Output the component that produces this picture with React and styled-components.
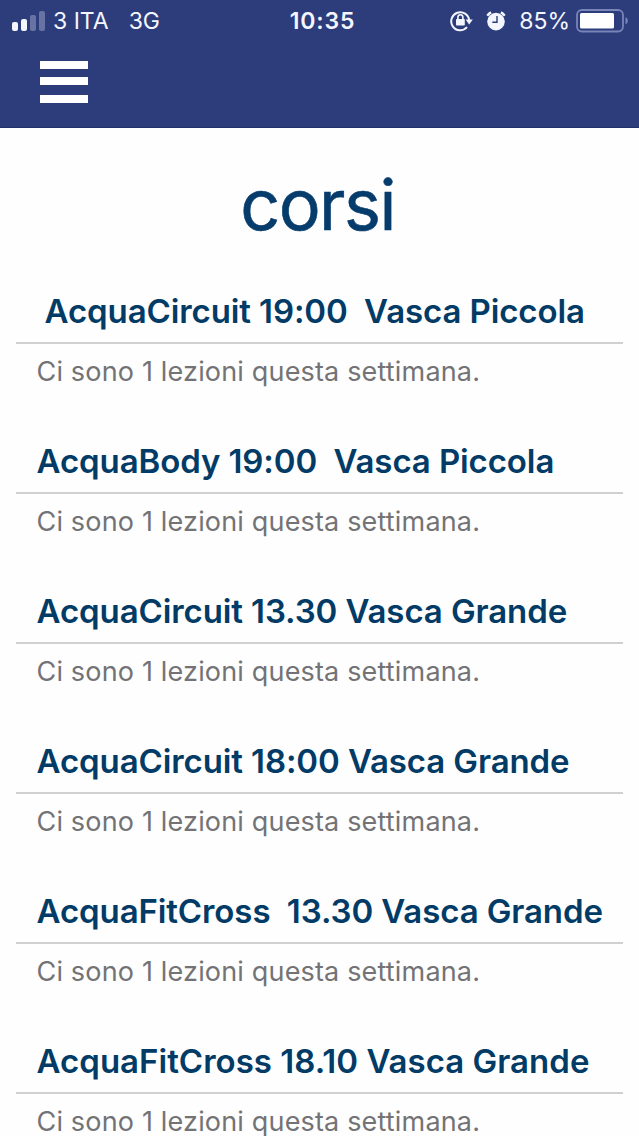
import React from 'react';
import styled, { createGlobalStyle } from 'styled-components';

const GlobalStyle = createGlobalStyle`
  * {
    box-sizing: border-box;
  }

  body {
    margin: 0;
    background-color: #fefefe;
    font-family: Inter, 'Liberation Sans', sans-serif;
    overflow: hidden;
  }
`;

const Screen = styled.div`
  height: 1136px;
  overflow: hidden;
`;

const Header = styled.header`
  height: 128px;
  background-color: #2d3c7b;
  border-bottom: 1px solid #24316b;
`;

// Barra di stato del telefono
const StatusBar = styled.div`
  display: grid;
  grid-template-columns: 1fr auto 1fr;
  align-items: center;
  height: 41px;
  padding: 0 10px 0 12px;
  color: #f4f6ff;
`;

const StatusGroup = styled.div`
  display: flex;
  align-items: center;
  justify-content: ${(props) => (props.$end ? 'flex-end' : 'flex-start')};
`;

const StatusText = styled.span`
  font-size: 23px;
  line-height: 28px;
  font-weight: ${(props) => props.$weight || 400};
  letter-spacing: ${(props) => props.$spacing || '0'};
  margin-left: ${(props) => props.$gap || '0'};
  margin-right: ${(props) => props.$after || '0'};
  white-space: pre;
`;

const StatusIcon = styled.svg`
  flex: none;
  margin-right: ${(props) => props.$gap || '0'};
`;

const MenuButton = styled.button`
  display: block;
  margin: 20px 0 0 40px;
  padding: 0;
  border: 0;
  background: none;
  cursor: pointer;
`;

const MenuLine = styled.span`
  display: block;
  width: 48px;
  height: 8px;
  background-color: #fff;
  margin-top: ${(props) => props.$gap || '0'};
`;

const PageTitle = styled.h1`
  height: 140px;
  margin: 0;
  padding: 32px 4px 0 0;
  color: #063c6b;
  font-size: 70px;
  line-height: 90px;
  font-weight: 400;
  letter-spacing: -1.5px;
  text-align: center;
  -webkit-text-stroke: 0.6px #063c6b;
`;

const CourseList = styled.ul`
  margin: 0;
  padding: 0 16px;
  list-style: none;
`;

const Course = styled.li`
  height: 150px;
`;

const CourseName = styled.h2`
  height: 76px;
  margin: 0;
  padding: 23px 0 0 ${(props) => (props.$indent ? '28.5px' : '20.5px')};
  border-bottom: 2px solid #d0d0d2;
  color: #033b67;
  font-size: 33px;
  line-height: 40px;
  font-weight: 600;
  letter-spacing: ${(props) => props.$spacing || '-0.1px'};
  white-space: pre;
`;

const CourseInfo = styled.p`
  margin: 0;
  padding: 10px 0 0 20.5px;
  color: #737376;
  font-size: 27px;
  line-height: 36px;
  letter-spacing: 0.17px;
  white-space: nowrap;
`;

const courses = [
  { name: 'AcquaCircuit 19:00  Vasca Piccola', lessons: 1, indent: true },
  { name: 'AcquaBody 19:00  Vasca Piccola', lessons: 1 },
  { name: 'AcquaCircuit 13.30 Vasca Grande', lessons: 1 },
  { name: 'AcquaCircuit 18:00 Vasca Grande', lessons: 1 },
  { name: 'AcquaFitCross  13.30 Vasca Grande', lessons: 1 },
  { name: 'AcquaFitCross 18.10 Vasca Grande', lessons: 1, spacing: '0.02px' },
];

const SignalIcon = () => (
  <StatusIcon width="33" height="20" viewBox="0 0 33 20" fill="#f4f6ff">
    <rect x="0" y="11" width="6" height="9" rx="2" />
    <rect x="9" y="8" width="6" height="12" rx="2" />
    <rect x="18" y="4" width="6" height="16" rx="2" opacity="0.3" />
    <rect x="27" y="0" width="6" height="20" rx="2" opacity="0.3" />
  </StatusIcon>
);

const RotationLockIcon = () => (
  <StatusIcon width="23" height="22" viewBox="0 0 23 22" fill="none" $gap="13px">
    <path d="M17 17.2 A9 9 0 1 1 19.2 10.5" stroke="#f4f6ff" strokeWidth="2" />
    <path d="M15.6 9.6 H22.8 L19.2 14.4 Z" fill="#f4f6ff" />
    <rect x="6" y="9" width="8.8" height="6.6" rx="0.8" fill="#f4f6ff" />
    <path d="M7.9 9.5 V7.4 a2.5 2.6 0 0 1 5 0 V9.5" stroke="#f4f6ff" strokeWidth="1.6" />
  </StatusIcon>
);

const AlarmIcon = () => (
  <StatusIcon width="20" height="20" viewBox="0 0 20 20" fill="none" $gap="13px">
    <circle cx="10" cy="10.6" r="8.8" fill="#f4f6ff" />
    <path d="M1.3 4.7 A12 12 0 0 1 5.1 1.4" stroke="#f4f6ff" strokeWidth="2.4" />
    <path d="M14.9 1.4 A12 12 0 0 1 18.7 4.7" stroke="#f4f6ff" strokeWidth="2.4" />
    <path d="M11 5 V11.2 H6.3" stroke="#2d3c7b" strokeWidth="1.4" />
  </StatusIcon>
);

const BatteryIcon = () => (
  <StatusIcon width="53" height="24" viewBox="0 0 53 24" fill="none">
    <rect x="1" y="1" width="46" height="21.5" rx="5" stroke="#7985b8" strokeWidth="1.8" />
    <rect x="4" y="4" width="34" height="15.5" rx="1.5" fill="#fff" />
    <path d="M49.5 8 A4.2 4.2 0 0 1 49.5 15.6 Z" fill="#7985b8" />
  </StatusIcon>
);

const App = () => {
  return (
    <>
      <GlobalStyle />
      <Screen>
        <Header>
          <StatusBar>
            <StatusGroup>
              <SignalIcon />
              <StatusText $gap="8px">3 ITA</StatusText>
              <StatusText $gap="20px">3G</StatusText>
            </StatusGroup>
            <StatusText $weight={600} $spacing="0.8px" $gap="4px">
              10:35
            </StatusText>
            <StatusGroup $end>
              <RotationLockIcon />
              <AlarmIcon />
              <StatusText $after="6px">85%</StatusText>
              <BatteryIcon />
            </StatusGroup>
          </StatusBar>
          <MenuButton aria-label="Menu">
            <MenuLine />
            <MenuLine $gap="8px" />
            <MenuLine $gap="10px" />
          </MenuButton>
        </Header>
        <PageTitle>corsi</PageTitle>
        <CourseList>
          {courses.map((course) => (
            <Course key={course.name}>
              <CourseName $indent={course.indent} $spacing={course.spacing}>
                {course.name}
              </CourseName>
              <CourseInfo>Ci sono {course.lessons} lezioni questa settimana.</CourseInfo>
            </Course>
          ))}
        </CourseList>
      </Screen>
    </>
  );
};

export default App;
